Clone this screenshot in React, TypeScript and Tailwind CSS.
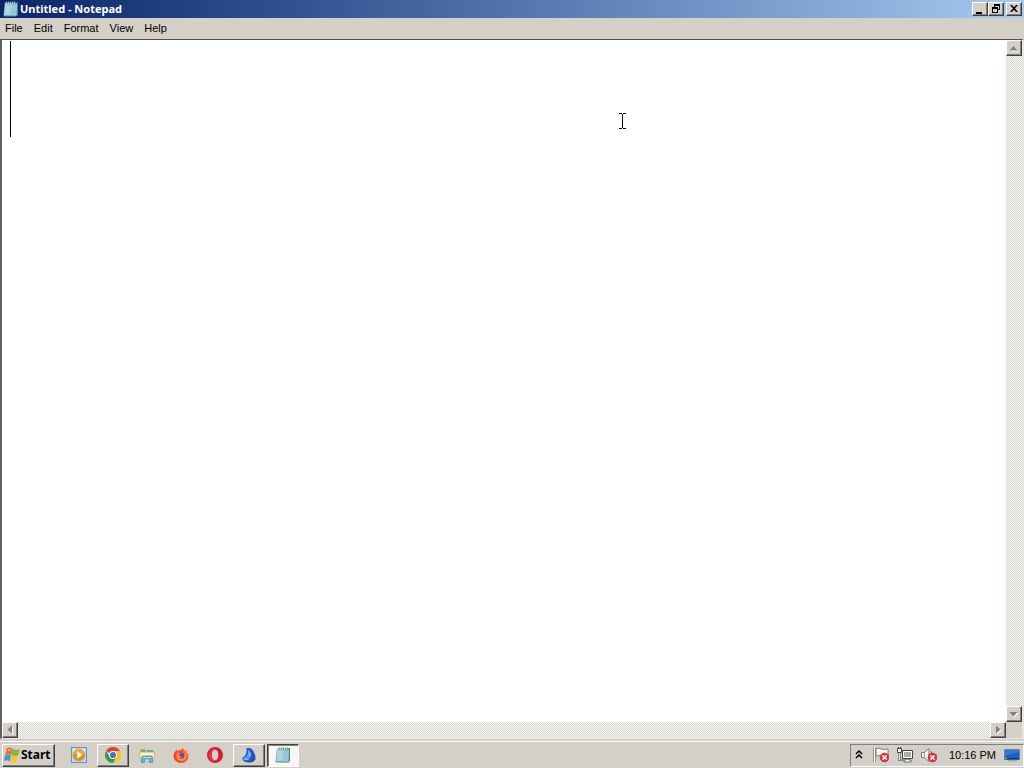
import React from "react";

const raised =
  "border border-t-white border-l-white border-r-[#404040] border-b-[#404040] shadow-[inset_-1px_-1px_0_#808080] bg-[#d4d0c8]";
const track =
  "bg-[repeating-conic-gradient(#ffffff_0_25%,#d4d0c8_0_50%)] bg-[length:2px_2px]";

function NotepadIcon() {
  return (
    <svg viewBox="0 0 16 16" className="h-4 w-4 shrink-0" aria-hidden="true">
      <path d="M2 1.500h13v12l-1.500 2H1L.5 14z" fill="#4b8297" />
      <path d="M2 2h12l-.5 12.500H1z" fill="#a3d2df" />
      <path d="M2.500 2.500h6L7.500 14H1.500z" fill="#c0e5ec" />
      <path d="M2.500 5h11M2.300 7h11M2.200 9h11M2 11h11M1.800 13h11" stroke="#7db1c1" strokeWidth=".6" />
      <path d="M4 .5v3M6 .5v3M8 .5v3M10 .5v3M12 .5v3M14 1v2" stroke="#405b68" strokeWidth=".9" />
      <path d="M3.400 .7v2M5.400 .7v2M7.400 .7v2M9.400 .7v2M11.400 .7v2" stroke="#eef8fa" strokeWidth=".7" />
    </svg>
  );
}

function WindowsFlag() {
  return (
    <svg viewBox="0 0 16 16" className="h-4 w-4 shrink-0" aria-hidden="true">
      <path d="M3 1Q6 -.2 8.500 1.800L7.200 7.700Q4.300 6 1.400 7.500z" fill="#e7652c" />
      <path d="M8.600 2.100Q12 3.800 16 1.900L14.400 8.200Q11 9.800 7.300 8z" fill="#83b943" />
      <path d="M1.200 7.800Q4 6.500 7 8.100L5.700 14.200Q2.800 12.500 -.2 14z" fill="#4a91d5" />
      <path d="M7.200 8.300Q10.600 10.200 14.200 8.500L12.700 14.800Q9.500 16.300 5.900 14.400z" fill="#f6c52e" />
      <path d="M4 2Q6 1.200 7.200 2.400L6.600 4.500Q5 3.600 3.500 4.400z" fill="#f5a27a" />
    </svg>
  );
}

function PlayerIcon() {
  return (
    <svg viewBox="0 0 16 16" className="h-4 w-4" aria-hidden="true">
      <rect x=".5" y=".5" width="15" height="15" fill="#b9d9f3" stroke="#5a94d1" />
      <path d="M2 2h12v7H2z" fill="#dceefa" />
      <circle cx="8" cy="8" r="6" fill="#ec8b12" stroke="#c9954d" strokeWidth=".5" />
      <path d="M3 7a5 5 0 0 1 10 0Q8 9 3 7" fill="#f5a435" />
      <path d="M6.200 4.200v7.600l5-3.800z" fill="white" />
    </svg>
  );
}

function ChromeIcon() {
  return (
    <svg viewBox="0 0 16 16" className="h-4 w-4" aria-hidden="true">
      <path d="M8 8L1.070 4A8 8 0 0 1 14.930 4L11.500 6z" fill="#e34134" />
      <path d="M8 4h6.930A8 8 0 0 1 8 16l3.460-6z" fill="#fbc617" />
      <path d="M1.070 4A8 8 0 0 0 8 16l3.460-6L8 11.500 4.540 10z" fill="#2e9e4a" />
      <circle cx="8" cy="8" r="4" fill="white" />
      <circle cx="8" cy="8" r="3.100" fill="#3f76d4" />
    </svg>
  );
}

function ExplorerIcon() {
  return (
    <svg viewBox="0 0 16 16" className="h-4 w-4" aria-hidden="true">
      <path d="M1 3l1-1h4l1 1h7l1 1v9H1z" fill="#c9b862" />
      <path d="M2 3h4v2H2z" fill="#62b457" />
      <path d="M8 3h6v2H8z" fill="#52abd3" />
      <path d="M.5 5h15l-.5 9H1z" fill="#f3e59a" stroke="#bcae62" strokeWidth=".6" />
      <path d="M2 6h12v2H2z" fill="#fff6c7" />
      <path d="M2.500 15.500V11q0-2 2-2h7q2 0 2 2v4.500h-3V12h-5v3.500z" fill="#65b0dc" stroke="#3584b8" strokeWidth=".6" />
      <path d="M4 10.500h8" stroke="#b9e6f5" />
    </svg>
  );
}

function FirefoxIcon() {
  return (
    <svg viewBox="0 0 16 16" className="h-4 w-4" aria-hidden="true">
      <path d="M2.500 4L3.500 2.500l1 1.500Q6 2.800 8 3L9.500 1q1 2 3 2.500l.7-.5Q16 6 15.500 9.500A7.500 6.500 0 0 1 .5 9.500Q.4 6 2.500 4z" fill="#f4512d" />
      <path d="M9.500 1q.5 2.500 3.500 4.500t.7 6q2.500-3 .8-7.500l-1 .2Q11 3.500 9.500 1z" fill="#ffc42e" />
      <path d="M2 5Q0 9 3 12.500T11 15Q2 14 3 7z" fill="#e63e4b" />
      <ellipse cx="8.500" cy="9.500" rx="5" ry="4.500" fill="#ff9b20" />
      <circle cx="8.300" cy="8.500" r="3.200" fill="#7940b5" />
      <path d="M3.500 6.500q2-1 4 .5-1.500.5-1.500 1.800 2 1 3.500.7-2 2.500-4.500 .5z" fill="#ff8a25" />
    </svg>
  );
}

function OperaIcon() {
  return (
    <svg viewBox="0 0 16 16" className="h-4 w-4" aria-hidden="true">
      <path fillRule="evenodd" d="M8 0A8 8 0 1 0 8 16 8 8 0 0 0 8 0zm0 2.600c2 0 3.300 2.300 3.300 5.400S10 13.400 8 13.400 4.700 11.100 4.700 8 6 2.600 8 2.600z" fill="#d91b31" />
      <path d="M7.500 1Q2 2 2 8t5.500 7Q3.300 12.500 3.300 8T7.500 1z" fill="#ee3c4d" />
    </svg>
  );
}

function BlueShellIcon() {
  return (
    <svg viewBox="0 0 16 16" className="h-4 w-4" aria-hidden="true">
      <path d="M5.500 1Q10 0 12.500 4.500 15 8 14.500 12.500 12 16 8.500 15.500 3 16 1.500 12.500 .8 10.500 3.500 9 6 7.500 5.500 1z" fill="#245bd0" />
      <path d="M7 2.500Q10.500 5 10 9.500 8.500 13 5 12.500q-3 0-2.500-1.500 2.500-.5 4-3 1-2 .5-5.500z" fill="#5e9cf0" />
      <path d="M10 3q4 5 2.500 11M7 11l2.500 4M10 9l1.500 5" stroke="#173e9b" fill="none" strokeWidth=".7" />
      <path d="M3 12q2 1.500 5 0M8 4.500q1.500 2 .5 4.500" stroke="#9fc9ff" fill="none" />
    </svg>
  );
}

function ErrorBadge() {
  return (
    <g>
      <circle cx="11.500" cy="10.500" r="4.500" fill="#d9363d" stroke="#b92730" strokeWidth=".5" />
      <path d="M9.500 8.500l4 4m0-4l-4 4" stroke="white" strokeWidth="1.500" />
    </g>
  );
}

function FlagIcon() {
  return (
    <svg viewBox="0 0 16 16" className="h-4 w-4" aria-hidden="true">
      <path d="M1.500 1v14" stroke="#555" strokeWidth="2" />
      <path d="M1.500 1v14" stroke="white" />
      <path d="M3 1.500q3-1 5 .5 3 1 7 0v7q-3 1-7 0-2-1-5 0z" fill="#f7f7f7" stroke="#666" strokeWidth=".8" />
      <ErrorBadge />
    </svg>
  );
}

function NetworkIcon() {
  return (
    <svg viewBox="0 0 16 16" className="h-4 w-4" aria-hidden="true">
      <path d="M5.500 3.500h10v8h-10z" fill="#999" stroke="#444" />
      <path d="M6.500 4.500h8v6h-8z" fill="#aaa" stroke="white" />
      <path d="M9 12h3v1h2v2H7v-2h2z" fill="#f4f4f4" stroke="#444" strokeWidth=".7" />
      <path d="M.5 1.500h4v4h-4zM1.500 0v2M3.500 0v2" stroke="#444" fill="white" />
      <path d="M2.500 6v7h4" stroke="#444" strokeWidth="2" fill="none" />
      <path d="M2.500 6v7h4" stroke="white" strokeWidth=".8" fill="none" />
    </svg>
  );
}

function SpeakerIcon() {
  return (
    <svg viewBox="0 0 16 16" className="h-4 w-4" aria-hidden="true">
      <path d="M.5 5.500h3l4.500-4v13l-4.500-4h-3z" fill="#f4f4f4" stroke="#777" />
      <path d="M3.500 5.500v5" stroke="#999" />
      <path d="M10 4q2 3 0 6" stroke="#777" fill="none" />
      <ErrorBadge />
    </svg>
  );
}

function DesktopIcon() {
  return (
    <svg viewBox="0 0 16 16" className="h-4 w-4" aria-hidden="true">
      <path d="M.5 2.500h15v10H.5z" fill="#1f5fc4" stroke="#6287ad" />
      <path d="M1 3h14v2Q8 6 1 9z" fill="#3478d3" />
      <path d="M1 11h14v1.500H1z" fill="#163967" />
      <path d="M1 11h2v1H1z" fill="#8ac45c" />
      <path d="M5 13h7l2 1.500H4z" fill="#91a9bc" />
    </svg>
  );
}

type Direction = "up" | "down" | "left" | "right";
const arrows: Record<Direction, string> = {
  up: "M2.500 9.500h8l-4-4.500z",
  down: "M2.500 5h8l-4 4.500z",
  left: "M9 2.500v8l-4.500-4z",
  right: "M5 2.500v8l4.500-4z",
};

function ScrollButton({ direction }: { direction: Direction }) {
  return (
    <button aria-label={`Scroll ${direction}`} className={`flex h-4 w-4 shrink-0 items-center justify-center ${raised}`}>
      <svg viewBox="0 0 14 14" className="h-3.5 w-3.5" aria-hidden="true">
        <path d={arrows[direction]} transform="translate(1 1)" fill="white" />
        <path d={arrows[direction]} fill="#808080" />
      </svg>
    </button>
  );
}

const captions = [
  { name: "Minimize", path: "M3 9h6v2H3z", gap: "" },
  { name: "Restore", path: "M5 1h6v6H9V6h1V3H6v1H5zM3 4h6v6H3zm1 2v3h4V6z", gap: "" },
  { name: "Close", path: "M3 2h2l2 2.200L9 2h2L8 5.500 11 9H9L7 6.800 5 9H3l3-3.500z", gap: "ml-0.5" },
];

const tasks = [
  { name: "Windows Media Player", icon: <PlayerIcon />, style: "" },
  { name: "Google Chrome", icon: <ChromeIcon />, style: raised },
  { name: "Windows Explorer", icon: <ExplorerIcon />, style: "" },
  { name: "Firefox", icon: <FirefoxIcon />, style: "" },
  { name: "Opera", icon: <OperaIcon />, style: "" },
  { name: "Desktop application", icon: <BlueShellIcon />, style: raised },
  {
    name: "Untitled - Notepad",
    icon: <NotepadIcon />,
    style: "border border-t-[#404040] border-l-[#404040] border-r-white border-b-white shadow-[inset_1px_1px_0_#808080] bg-[#f8f7f5]",
  },
];

export default function App() {
  return (
    <div className="flex h-screen flex-col overflow-hidden bg-[#d4d0c8] font-['Liberation_Sans',Arial,sans-serif] text-[11px] leading-4 text-black">
      <main className="flex min-h-0 flex-1 flex-col">
        <header className="flex h-[18px] shrink-0 items-center bg-linear-to-r from-[#0a246a] to-[#a6caf0] pr-0.5 pl-[3px]">
          <NotepadIcon />
          <h1 className="ml-px flex-1 font-['Noto_Sans',sans-serif] text-[11px] font-bold text-white">Untitled - Notepad</h1>
          <div className="flex">
            {captions.map((c) => (
              <button key={c.name} aria-label={c.name} className={`flex h-3.5 w-4 items-center justify-center ${raised} ${c.gap}`}>
                <svg viewBox="0 0 14 12" className="h-3 w-3.5" aria-hidden="true">
                  <path d={c.path} fillRule="evenodd" />
                </svg>
              </button>
            ))}
          </div>
        </header>

        <nav aria-label="Menu bar" className="flex h-[21px] shrink-0 items-center gap-[11px] pb-0.5 pl-[5px]">
          {["File", "Edit", "Format", "View", "Help"].map((m) => (
            <button key={m}>{m}</button>
          ))}
        </nav>

        <section className="flex min-h-0 flex-1 flex-col border-t border-r-2 border-b border-l-2 border-t-[#505050] border-r-[#e8e6e1] border-b-[#e8e6e1] border-l-[#606060]">
          <div className="flex min-h-0 flex-1">
            <div className="relative flex min-w-0 flex-1 bg-white">
              <textarea aria-label="Document text" className="flex-1 resize-none overflow-hidden bg-white px-2 text-[80px] leading-24 outline-none" />
              <span className="pointer-events-none absolute top-px left-2 h-24 w-px bg-black" />
              <svg viewBox="0 0 7 16" className="pointer-events-none absolute top-[73px] left-[617px] h-4 w-[7px]" aria-hidden="true">
                <path d="M0 .5h3M4 .5h3M3.500 1v14M0 15.500h3M4 15.500h3" stroke="black" fill="none" />
              </svg>
            </div>
            <div className="flex w-4 shrink-0 flex-col">
              <ScrollButton direction="up" />
              <div className={`flex-1 ${track}`} />
              <ScrollButton direction="down" />
            </div>
          </div>
          <div className="flex h-4 shrink-0 pr-4">
            <ScrollButton direction="left" />
            <div className={`flex-1 ${track}`} />
            <ScrollButton direction="right" />
          </div>
        </section>
      </main>

      <footer className="flex h-[29px] shrink-0 items-center border-t-2 border-[#d4d0c8] pt-px pl-0.5 shadow-[inset_0_1px_0_white]">
        <button className={`flex h-[23px] w-[53px] items-center gap-px pl-px font-['Noto_Sans',sans-serif] text-xs font-bold ${raised}`}>
          <WindowsFlag />
          Start
        </button>
        <nav aria-label="Taskbar" className="ml-2 flex gap-0.5">
          {tasks.map((t) => (
            <button key={t.name} aria-label={t.name} className={`flex h-[23px] w-8 items-center justify-center ${t.style}`}>
              {t.icon}
            </button>
          ))}
        </nav>
        <div className="ml-auto flex h-[23px] items-center border border-t-[#808080] border-r-white border-b-white border-l-[#808080] pr-[3px] pl-1">
          <button aria-label="Show hidden icons" className="mr-2.5">
            <svg viewBox="0 0 8 10" className="h-2.5 w-2" aria-hidden="true">
              <path d="M1 4l3-3 3 3M1 8l3-3 3 3" stroke="black" strokeWidth="1.500" fill="none" />
            </svg>
          </button>
          <div className="flex gap-2">
            <button aria-label="Action Center"><FlagIcon /></button>
            <button aria-label="Network"><NetworkIcon /></button>
            <button aria-label="Volume muted"><SpeakerIcon /></button>
          </div>
          <time className="ml-3">10:16 PM</time>
          <button aria-label="Show desktop" className="ml-2"><DesktopIcon /></button>
        </div>
      </footer>
    </div>
  );
}
